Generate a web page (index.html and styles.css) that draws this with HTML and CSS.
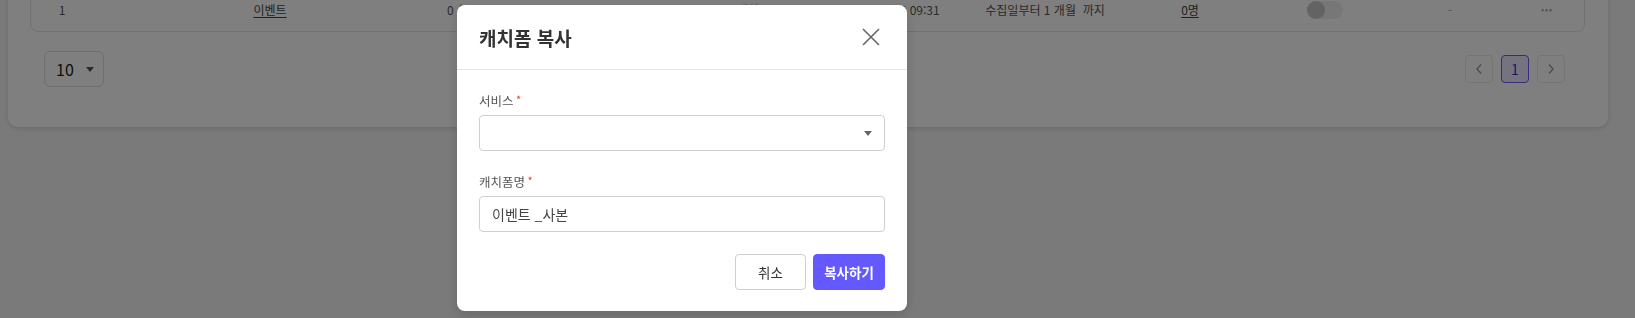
FILE: index.html
```html
<!DOCTYPE html>
<html lang="ko">
<head>
<meta charset="utf-8">
<title>캐치폼 복사</title>
<link rel="stylesheet" href="styles.css">
</head>
<body>
<div class="page">
  <div class="card">
    <div class="table-box">
      <div class="row">
        <div class="cell">1</div>
        <div class="cell"><span class="link">이벤트</span></div>
        <div class="cell left">0 / 0</div>
        <div class="cell"></div>
        <div class="cell">캐치폼</div>
        <div class="cell">2024.01.10 09:31</div>
        <div class="cell">수집일부터 1 개월&nbsp; 까지</div>
        <div class="cell"><span class="link">0명</span></div>
        <div class="cell"><span class="toggle"><span class="knob"></span></span></div>
        <div class="cell muted">-</div>
        <div class="cell muted dots">•••</div>
      </div>
    </div>
    <div class="pager-row">
      <div class="size-select"><span>10</span><span class="tri"></span></div>
      <div class="pages">
        <div class="pg"><svg width="8" height="12" viewBox="0 0 8 12"><polyline points="6,1.5 2,6 6,10.5" fill="none" stroke="#999" stroke-width="1.3"/></svg></div>
        <div class="pg active">1</div>
        <div class="pg"><svg width="8" height="12" viewBox="0 0 8 12"><polyline points="2,1.5 6,6 2,10.5" fill="none" stroke="#999" stroke-width="1.3"/></svg></div>
      </div>
    </div>
  </div>
</div>

<div class="overlay"></div>

<div class="modal">
  <div class="modal-head">
    <h2 class="modal-title">캐치폼 복사</h2>
    <button class="close" aria-label="닫기">
      <svg width="24" height="24" viewBox="0 0 24 24"><path d="M4 4 L20 20 M20 4 L4 20" stroke="#666" stroke-width="1.6" fill="none"/></svg>
    </button>
  </div>
  <div class="modal-body">
    <div class="field">
      <label class="label">서비스 <span class="req">*</span></label>
      <div class="select"><span class="tri dark"></span></div>
    </div>
    <div class="field">
      <label class="label">캐치폼명 <span class="req">*</span></label>
      <div class="input">이벤트 _사본</div>
    </div>
    <div class="actions">
      <button class="btn">취소</button>
      <button class="btn primary">복사하기</button>
    </div>
  </div>
</div>
</body>
</html>
```

FILE: styles.css
```css
* { box-sizing: border-box; }
html, body { margin: 0; padding: 0; }
body {
  background: #f5f5f6;
  font-family: "Noto Sans CJK KR", "Noto Sans", sans-serif;
  color: #333;
  width: 1635px;
  height: 318px;
  overflow: hidden;
}
.page {
  padding: 0 27px 0 8px;
}
.card {
  margin-top: -14px;
  background: #fff;
  border-radius: 0 0 10px 10px;
  padding: 0 23px 40px 22px;
  box-shadow: 0 2px 5px rgba(0,0,0,0.12);
}
.table-box {
  border: 1px solid #e2e2e2;
  border-radius: 0 0 8px 8px;
}
.row {
  display: grid;
  grid-template-columns: 62px 354px 80px 163px 126px 154px 150px 140px 130px 120px 1fr;
  height: 44px;
  align-items: center;
  font-size: 12px;
  color: #555;
}
.cell { text-align: center; white-space: nowrap; }
.cell.left { text-align: left; }
.link { text-decoration: underline; color: #444; text-underline-offset: 2px; }
.muted { color: #aaa; }
.dots { font-size: 9px; letter-spacing: 1px; }
.toggle {
  display: inline-flex;
  width: 36px;
  height: 18px;
  border-radius: 9px;
  background: #eeeeee;
  vertical-align: middle;
}
.knob {
  width: 18px;
  height: 18px;
  border-radius: 50%;
  background: #c6c6c6;
}
.pager-row {
  display: flex;
  justify-content: space-between;
  align-items: center;
  margin-top: 19px;
  padding: 0 20px 0 14px;
}
.size-select {
  width: 60px;
  height: 36px;
  border: 1px solid #dcdcdc;
  border-radius: 6px;
  display: flex;
  align-items: center;
  justify-content: space-between;
  padding: 0 9px 0 11px;
  font-size: 16px;
  color: #222;
}
.tri {
  width: 0;
  height: 0;
  border-left: 4.5px solid transparent;
  border-right: 4.5px solid transparent;
  border-top: 5px solid #555;
}
.pages { display: flex; gap: 8px; }
.pg {
  width: 28px;
  height: 28px;
  border: 1px solid #eaeaea;
  border-radius: 4px;
  display: flex;
  align-items: center;
  justify-content: center;
  font-size: 14px;
}
.pg.active {
  border-color: #6a5df0;
  background: #e9e7ff;
  color: #3c2fc0;
}
.overlay {
  position: fixed;
  inset: 0;
  background: rgba(0,0,0,0.5);
}
.modal {
  position: fixed;
  left: 457px;
  top: 5px;
  width: 450px;
  height: 306px;
  background: #fff;
  border-radius: 8px;
  box-shadow: 0 4px 12px rgba(0,0,0,0.15);
}
.modal-head {
  height: 65px;
  border-bottom: 1px solid #e4e4e4;
  display: flex;
  align-items: center;
  justify-content: space-between;
  padding: 0 24px 0 22px;
}
.modal-title {
  margin: 0;
  font-size: 19px;
  font-weight: 700;
  color: #333;
}
.close {
  border: 0;
  background: none;
  padding: 0;
  width: 24px;
  height: 24px;
  display: flex;
}
.modal-body {
  padding: 22px 22px 21px;
  display: flex;
  flex-direction: column;
  gap: 22px;
}
.field { display: flex; flex-direction: column; gap: 5px; }
.label {
  display: block;
  height: 18px;
  font-size: 12.5px;
  line-height: 18px;
  color: #555;
  overflow: visible;
}
.req {
  color: #e0402a;
  font-size: 11px;
  line-height: 1;
  position: relative;
  top: -2px;
  margin-left: -1px;
}
.select, .input {
  height: 36px;
  border: 1px solid #cfcfcf;
  border-radius: 4px;
  display: flex;
  align-items: center;
}
.select { justify-content: flex-end; padding-right: 12px; }
.tri.dark { border-top-color: #666; }
.input {
  padding-left: 12px;
  font-size: 14px;
  color: #444;
}
.actions {
  display: flex;
  justify-content: flex-end;
  gap: 7px;
}
.btn {
  height: 36px;
  width: 71px;
  border: 1px solid #cfcfcf;
  border-radius: 4px;
  background: #fff;
  font-family: "Noto Sans CJK KR", sans-serif;
  font-size: 13.5px;
  color: #333;
}
.btn.primary {
  width: 72px;
  border-color: #6459ff;
  background: #6459ff;
  color: #fff;
  font-weight: 700;
}
```
